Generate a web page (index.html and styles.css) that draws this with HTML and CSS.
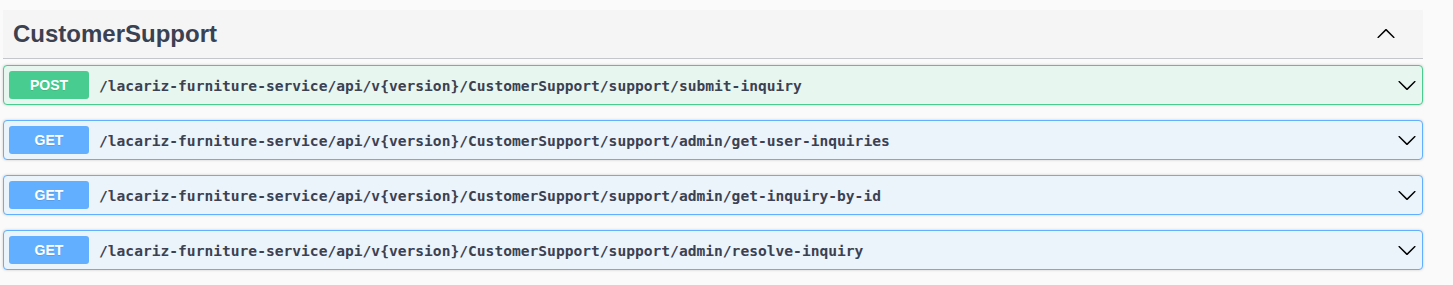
FILE: index.html
```html
<!DOCTYPE html>
<html>
<head>
<meta charset="utf-8">
<link rel="stylesheet" href="styles.css">
</head>
<body>
<div class="section">
  <div class="tag">
    <h3 class="tag-title">CustomerSupport</h3>
    <svg class="arrow up" viewBox="0 0 20 20" width="20" height="20"><path d="M17.418 6.109c.272-.268.709-.268.979 0s.271.701 0 .969l-7.908 7.83c-.27.268-.707.268-.979 0l-7.908-7.830c-.27-.268-.27-.701 0-.969.271-.268.709-.268.979 0L10 13.25l7.418-7.141z"/></svg>
  </div>
  <div class="op post">
    <span class="method">POST</span>
    <span class="path">/lacariz-furniture-service/api/v{version}/CustomerSupport/support/submit-inquiry</span>
    <svg class="arrow" viewBox="0 0 20 20" width="20" height="20"><path d="M17.418 6.109c.272-.268.709-.268.979 0s.271.701 0 .969l-7.908 7.83c-.27.268-.707.268-.979 0l-7.908-7.83c-.27-.268-.27-.701 0-.969.271-.268.709-.268.979 0L10 13.25l7.418-7.141z"/></svg>
  </div>
  <div class="op get">
    <span class="method">GET</span>
    <span class="path">/lacariz-furniture-service/api/v{version}/CustomerSupport/support/admin/get-user-inquiries</span>
    <svg class="arrow" viewBox="0 0 20 20" width="20" height="20"><path d="M17.418 6.109c.272-.268.709-.268.979 0s.271.701 0 .969l-7.908 7.83c-.27.268-.707.268-.979 0l-7.908-7.83c-.27-.268-.27-.701 0-.969.271-.268.709-.268.979 0L10 13.25l7.418-7.141z"/></svg>
  </div>
  <div class="op get">
    <span class="method">GET</span>
    <span class="path">/lacariz-furniture-service/api/v{version}/CustomerSupport/support/admin/get-inquiry-by-id</span>
    <svg class="arrow" viewBox="0 0 20 20" width="20" height="20"><path d="M17.418 6.109c.272-.268.709-.268.979 0s.271.701 0 .969l-7.908 7.83c-.27.268-.707.268-.979 0l-7.908-7.83c-.27-.268-.27-.701 0-.969.271-.268.709-.268.979 0L10 13.25l7.418-7.141z"/></svg>
  </div>
  <div class="op get">
    <span class="method">GET</span>
    <span class="path">/lacariz-furniture-service/api/v{version}/CustomerSupport/support/admin/resolve-inquiry</span>
    <svg class="arrow" viewBox="0 0 20 20" width="20" height="20"><path d="M17.418 6.109c.272-.268.709-.268.979 0s.271.701 0 .969l-7.908 7.83c-.27.268-.707.268-.979 0l-7.908-7.83c-.27-.268-.27-.701 0-.969.271-.268.709-.268.979 0L10 13.25l7.418-7.141z"/></svg>
  </div>
</div>
</body>
</html>
```
FILE: styles.css
```css
html, body {
  margin: 0;
  padding: 0;
  background: #fafafa;
}
.section {
  width: 1420px;
  margin: 10px 0 0 3px;
}
.tag {
  display: flex;
  align-items: center;
  height: 48px;
  padding: 0 27px 0 10px;
  background: #f5f5f5;
  border-bottom: 1px solid #c4c6cb;
  margin-bottom: 6px;
}
.tag-title {
  margin: 0;
  font-family: "Liberation Sans", Arial, sans-serif;
  font-size: 24px;
  font-weight: 700;
  color: #3b4151;
  flex: 1;
}
.arrow {
  display: block;
  fill: #000;
  flex: none;
}
.arrow.up {
  transform: rotate(180deg);
}
.op {
  display: flex;
  align-items: center;
  height: 28px;
  padding: 5px;
  border: 1px solid;
  border-radius: 4px;
  box-shadow: 0 0 3px rgba(0, 0, 0, 0.19);
  margin-bottom: 15px;
}
.op.post {
  background: #e8f6f0;
  border-color: #49cc90;
}
.op.get {
  background: #ebf3fb;
  border-color: #61affe;
}
.method {
  width: 80px;
  height: 28px;
  line-height: 28px;
  text-align: center;
  border-radius: 3px;
  color: #fff;
  font-family: "Liberation Sans", Arial, sans-serif;
  font-size: 14px;
  font-weight: 700;
  text-shadow: 0 1px 0 rgba(0, 0, 0, 0.1);
  flex: none;
}
.post .method { background: #49cc90; }
.get .method { background: #61affe; }
.path {
  flex: 1;
  padding: 0 10px;
  font-family: "DejaVu Sans Mono", "Liberation Mono", monospace;
  font-size: 14.6px;
  font-weight: 700;
  color: #3b4151;
  white-space: nowrap;
}
```
